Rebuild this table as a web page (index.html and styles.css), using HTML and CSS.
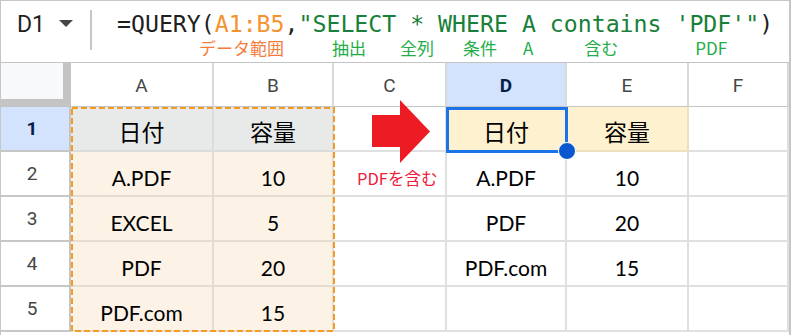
FILE: index.html
```html
<!DOCTYPE html>
<html lang="ja">
<head>
<meta charset="utf-8">
<title>QUERY PDF</title>
<link rel="stylesheet" href="styles.css">
</head>
<body>
<div class="app">
  <div class="formula-bar">
    <div class="namebox"><span class="ref">D1</span><span class="caret"></span></div>
    <div class="sep"></div>
    <div class="formula">
      <div class="expr"><span class="k">=QUERY(</span><span class="rng">A1:B5</span><span class="k">,</span><span class="str">"SELECT * WHERE A contains 'PDF'"</span><span class="k">)</span></div>
      <div class="notes">
        <span class="n n1 orange">データ範囲</span>
        <span class="n n2 green">抽出</span>
        <span class="n n3 green">全列</span>
        <span class="n n4 green">条件</span>
        <span class="n n5 green">A</span>
        <span class="n n6 green">含む</span>
        <span class="n n7 green">PDF</span>
      </div>
    </div>
  </div>

  <div class="sheet">
    <div class="corner"></div>
    <div class="ch">A</div>
    <div class="ch">B</div>
    <div class="ch">C</div>
    <div class="ch active">D</div>
    <div class="ch">E</div>
    <div class="ch">F</div>

    <div class="rh active">1</div>
    <div class="c head-gray jp">日付</div>
    <div class="c head-gray jp">容量</div>
    <div class="c"></div>
    <div class="c head-yellow jp">日付</div>
    <div class="c head-yellow jp">容量</div>
    <div class="c"></div>

    <div class="rh">2</div>
    <div class="c src">A.PDF</div>
    <div class="c src">10</div>
    <div class="c note-cell"><span class="red-note">PDFを含む</span></div>
    <div class="c">A.PDF</div>
    <div class="c">10</div>
    <div class="c"></div>

    <div class="rh">3</div>
    <div class="c src">EXCEL</div>
    <div class="c src">5</div>
    <div class="c"></div>
    <div class="c">PDF</div>
    <div class="c">20</div>
    <div class="c"></div>

    <div class="rh">4</div>
    <div class="c src">PDF</div>
    <div class="c src">20</div>
    <div class="c"></div>
    <div class="c">PDF.com</div>
    <div class="c">15</div>
    <div class="c"></div>

    <div class="rh">5</div>
    <div class="c src">PDF.com</div>
    <div class="c src">15</div>
    <div class="c"></div>
    <div class="c"></div>
    <div class="c"></div>
    <div class="c"></div>

    <svg class="range-dash" width="264" height="225" viewBox="0 0 264 225">
      <rect x="1" y="1" width="262" height="223" fill="none" stroke="#f59a23" stroke-width="2" stroke-dasharray="6 3"/>
    </svg>
    <svg class="arrow" width="60" height="63" viewBox="0 0 60 63">
      <polygon points="1,15 29,15 29,0 59,31.5 29,63 29,47 1,47" fill="#ed1c24"/>
    </svg>
    <div class="sel"></div>
    <div class="handle"></div>
  </div>
</div>
</body>
</html>
```

FILE: styles.css
```css
* { box-sizing: border-box; }
html, body { margin: 0; padding: 0; background: #fff; }
body { width: 791px; height: 335px; overflow: hidden; }

.app {
  width: 791px;
  height: 335px;
  border-top: 1px solid #c6c6c6;
  border-left: 1px solid #c6c6c6;
  border-right: 2px solid #c6c6c6;
  overflow: hidden;
  font-family: Roboto, "Noto Sans", sans-serif;
}

/* formula bar */
.formula-bar {
  height: 62px;
  display: flex;
  align-items: flex-start;
  border-bottom: 1px solid #c4c4c4;
}
.namebox {
  width: 89px;
  height: 47px;
  padding-left: 16px;
  display: flex;
  align-items: center;
}
.ref { font-size: 23px; color: #1f1f1f; }
.caret {
  margin-left: 14px;
  width: 0; height: 0;
  border-left: 7px solid transparent;
  border-right: 7px solid transparent;
  border-top: 7px solid #444746;
  margin-top: -2px;
}
.sep { width: 2px; height: 40px; margin-top: 9px; background: #c7c7c7; }
.formula { margin-left: 25px; padding-top: 10px; }
.expr {
  font-family: "DejaVu Sans Mono", "Liberation Mono", monospace;
  font-size: 23.2px;
  line-height: 26px;
  white-space: pre;
}
.k { color: #1f1f1f; }
.rng { color: #f6922e; }
.str { color: #188038; }
.notes {
  display: flex;
  margin-top: 1px;
  font-family: "Noto Sans CJK JP", "Noto Sans", sans-serif;
  font-size: 17px;
  line-height: 20px;
  white-space: nowrap;
}
.orange { color: #f47b3a; }
.green { color: #22ad48; }
.n1 { margin-left: 82px; }
.n2 { margin-left: 48px; }
.n3 { margin-left: 34px; }
.n4 { margin-left: 29px; }
.n5 { margin-left: 26px; }
.n6 { margin-left: 51px; }
.n7 { margin-left: 77px; }

/* sheet grid */
.sheet {
  position: relative;
  display: grid;
  grid-template-columns: 70px 143px 120px 113px 120px 122px 100px;
  grid-template-rows: 44px repeat(5, 45px);
}
.corner {
  background: #f8f9fa;
  border-right: 8px solid #c4c4c4;
  border-bottom: 8px solid #c4c4c4;
}
.ch {
  display: flex;
  align-items: center;
  justify-content: center;
  font-size: 19px;
  color: #444746;
  border-right: 2px solid #d9d9d9;
  border-bottom: 1px solid #c4c4c4;
  padding-top: 1px;
}
.ch.active { background: #d3e3fd; color: #041e49; font-weight: 700; }
.rh {
  display: flex;
  align-items: center;
  justify-content: center;
  padding-right: 6px;
  font-size: 19px;
  color: #444746;
  border-right: 2px solid #c4c4c4;
  border-bottom: 2px solid #c7c7c7;
}
.rh.active { background: #d3e3fd; color: #041e49; font-weight: 700; }

.c {
  display: flex;
  align-items: flex-end;
  justify-content: center;
  padding-bottom: 5px;
  font-family: Lato, "Noto Sans CJK JP", sans-serif;
  font-size: 21px;
  line-height: 24px;
  color: #000;
  border-right: 2px solid #e0e0e0;
  border-bottom: 2px solid #e0e0e0;
}
.c.jp {
  font-family: "Noto Sans CJK JP", sans-serif;
  font-size: 23px;
  line-height: 23px;
  padding-bottom: 7px;
}
.head-gray { background: #e8eae9; border-color: #dcdcdc; }
.head-yellow { background: #fef1cf; border-color: #ece0bd; }
.src { background: #fcf3e6; border-color: #e5ddd1; }

.note-cell { justify-content: flex-start; padding-left: 23px; padding-bottom: 7px; }
.red-note {
  font-family: "Noto Sans CJK JP", sans-serif;
  font-size: 16.5px;
  line-height: 20px;
  color: #ec2039;
}

/* overlays */
.range-dash { position: absolute; left: 70px; top: 44px; }
.arrow { position: absolute; left: 370px; top: 37px; }
.sel {
  position: absolute;
  left: 445px;
  top: 44px;
  width: 122px;
  height: 46px;
  border: 3px solid #1a73e8;
}
.handle {
  position: absolute;
  left: 557px;
  top: 79px;
  width: 18px;
  height: 18px;
  border-radius: 50%;
  background: #0b57d0;
  border: 1px solid #fff;
}
```
